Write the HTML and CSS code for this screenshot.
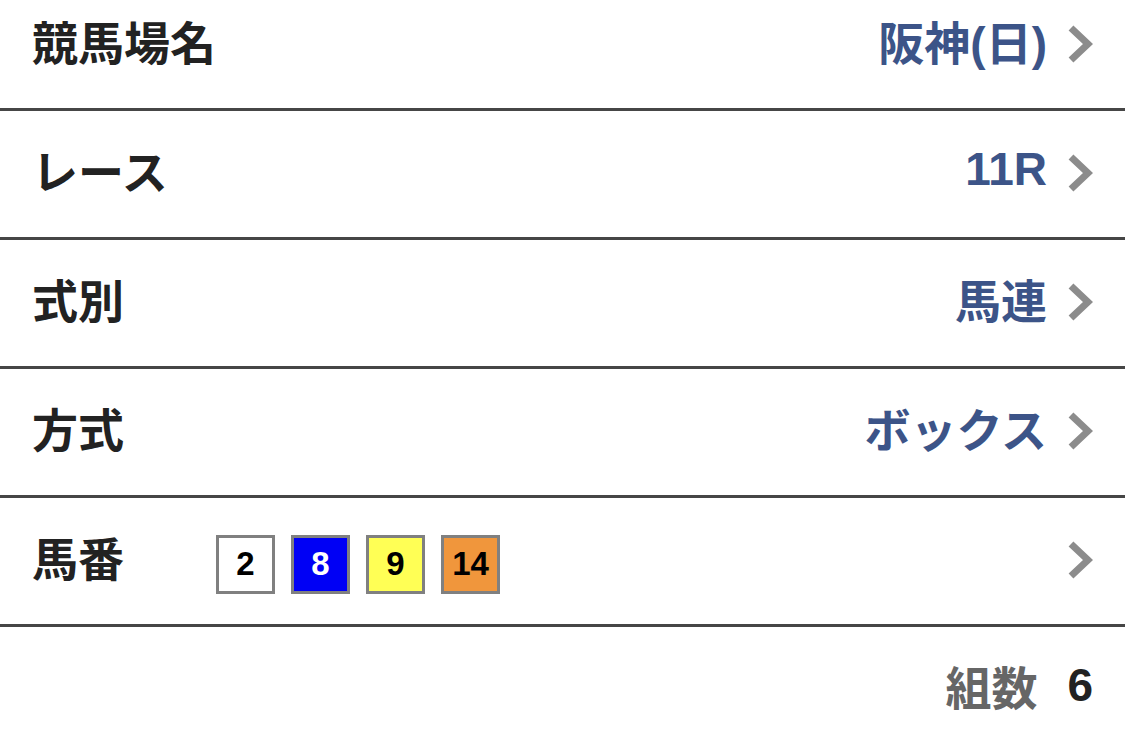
FILE: index.html
```html
<!DOCTYPE html>
<html lang="ja">
<head>
    <meta charset="UTF-8">
    <meta name="viewport" content="width=device-width, initial-scale=1.0">
    <title>馬券条件</title>
    <link rel="stylesheet" href="styles.css">
</head>
<body>

    <div class="list">
        <!-- Race selection rows -->
        <a class="row" href="#">
            <span class="label">競馬場名</span>
            <span class="value">阪神(日)</span>
            <svg class="chevron" viewBox="0 0 26 40"><polyline points="4,4 21,20 4,36"/></svg>
        </a>
        <a class="row" href="#">
            <span class="label">レース</span>
            <span class="value">11R</span>
            <svg class="chevron" viewBox="0 0 26 40"><polyline points="4,4 21,20 4,36"/></svg>
        </a>
        <a class="row" href="#">
            <span class="label">式別</span>
            <span class="value">馬連</span>
            <svg class="chevron" viewBox="0 0 26 40"><polyline points="4,4 21,20 4,36"/></svg>
        </a>
        <a class="row" href="#">
            <span class="label">方式</span>
            <span class="value">ボックス</span>
            <svg class="chevron" viewBox="0 0 26 40"><polyline points="4,4 21,20 4,36"/></svg>
        </a>

        <!-- Horse numbers, coloured by gate -->
        <a class="row" href="#">
            <span class="label wide">馬番</span>
            <span class="horses">
                <span class="num waku-1">2</span>
                <span class="num waku-4">8</span>
                <span class="num waku-5">9</span>
                <span class="num waku-7">14</span>
            </span>
            <svg class="chevron" viewBox="0 0 26 40"><polyline points="4,4 21,20 4,36"/></svg>
        </a>
    </div>

    <div class="total">
        <span class="total-label">組数</span>
        <span class="total-count">6</span>
    </div>

</body>
</html>
```

FILE: styles.css
```css
body {
    margin: 0;
    background-color: #fff;
    font-family: "Liberation Sans", "Noto Sans CJK JP", sans-serif;
    font-weight: bold;
}
.list {
    margin-top: -18px;
}
.row {
    display: flex;
    align-items: center;
    height: 116px;
    padding: 0 32px 10px;
    border-bottom: 3px solid #464646;
    text-decoration: none;
    color: #222;
}
.label {
    font-size: 46px;
    color: #222;
}
.label.wide {
    width: 184px;
    flex-shrink: 0;
}
.value {
    margin-left: auto;
    font-size: 46px;
    color: #3c5488;
}
.chevron {
    width: 26px;
    height: 40px;
    margin-top: 8px;
    margin-left: 20px;
    flex-shrink: 0;
}
.chevron polyline {
    fill: none;
    stroke: #8c8c8c;
    stroke-width: 7;
}
.horses {
    display: flex;
    gap: 16px;
    margin-top: 16px;
    margin-right: auto;
}
.num {
    display: flex;
    align-items: center;
    justify-content: center;
    box-sizing: border-box;
    width: 59px;
    height: 59px;
    border: 3px solid #808080;
    font-family: "Liberation Sans", Arial, sans-serif;
    font-size: 33px;
    color: #000;
}
.waku-1 {
    background-color: #fff;
}
.waku-4 {
    background-color: #0000f5;
    color: #fff;
}
.waku-5 {
    background-color: #ffff55;
}
.waku-7 {
    background-color: #f0963c;
}
.total {
    display: flex;
    justify-content: flex-end;
    align-items: center;
    height: 116px;
    padding: 0 32px 10px;
    font-size: 46px;
}
.total-label {
    color: #666;
}
.total-count {
    margin-left: 30px;
    color: #222;
}
```
